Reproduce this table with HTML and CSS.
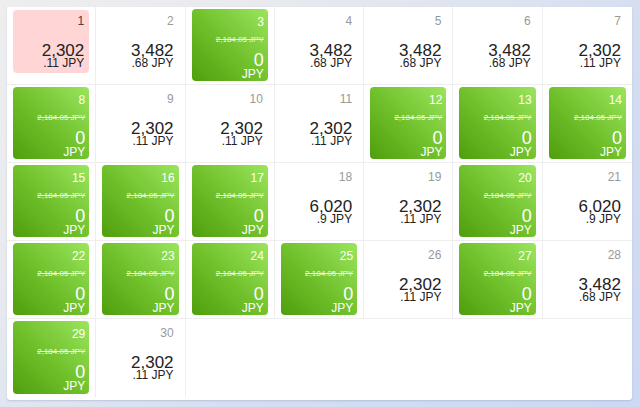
FILE: index.html
```html
<!DOCTYPE html>
<html>
<head>
<meta charset="utf-8">
<link rel="stylesheet" href="styles.css">
</head>
<body>
<div class="card">
  <div class="grid">
    <div class="cell"><div class="box today"><div class="day">1</div><div class="amt">2,302</div><div class="cents">.11 JPY</div></div></div>
    <div class="cell"><div class="box"><div class="day">2</div><div class="amt">3,482</div><div class="cents">.68 JPY</div></div></div>
    <div class="cell"><div class="box free"><div class="day">3</div><div class="was">2,184.05 JPY</div><div class="zero">0</div><div class="cur">JPY</div></div></div>
    <div class="cell"><div class="box"><div class="day">4</div><div class="amt">3,482</div><div class="cents">.68 JPY</div></div></div>
    <div class="cell"><div class="box"><div class="day">5</div><div class="amt">3,482</div><div class="cents">.68 JPY</div></div></div>
    <div class="cell"><div class="box"><div class="day">6</div><div class="amt">3,482</div><div class="cents">.68 JPY</div></div></div>
    <div class="cell"><div class="box"><div class="day">7</div><div class="amt">2,302</div><div class="cents">.11 JPY</div></div></div>

    <div class="cell"><div class="box free"><div class="day">8</div><div class="was">2,184.05 JPY</div><div class="zero">0</div><div class="cur">JPY</div></div></div>
    <div class="cell"><div class="box"><div class="day">9</div><div class="amt">2,302</div><div class="cents">.11 JPY</div></div></div>
    <div class="cell"><div class="box"><div class="day">10</div><div class="amt">2,302</div><div class="cents">.11 JPY</div></div></div>
    <div class="cell"><div class="box"><div class="day">11</div><div class="amt">2,302</div><div class="cents">.11 JPY</div></div></div>
    <div class="cell"><div class="box free"><div class="day">12</div><div class="was">2,184.05 JPY</div><div class="zero">0</div><div class="cur">JPY</div></div></div>
    <div class="cell"><div class="box free"><div class="day">13</div><div class="was">2,184.05 JPY</div><div class="zero">0</div><div class="cur">JPY</div></div></div>
    <div class="cell"><div class="box free"><div class="day">14</div><div class="was">2,184.05 JPY</div><div class="zero">0</div><div class="cur">JPY</div></div></div>

    <div class="cell"><div class="box free"><div class="day">15</div><div class="was">2,184.05 JPY</div><div class="zero">0</div><div class="cur">JPY</div></div></div>
    <div class="cell"><div class="box free"><div class="day">16</div><div class="was">2,184.05 JPY</div><div class="zero">0</div><div class="cur">JPY</div></div></div>
    <div class="cell"><div class="box free"><div class="day">17</div><div class="was">2,184.05 JPY</div><div class="zero">0</div><div class="cur">JPY</div></div></div>
    <div class="cell"><div class="box"><div class="day">18</div><div class="amt">6,020</div><div class="cents">.9 JPY</div></div></div>
    <div class="cell"><div class="box"><div class="day">19</div><div class="amt">2,302</div><div class="cents">.11 JPY</div></div></div>
    <div class="cell"><div class="box free"><div class="day">20</div><div class="was">2,184.05 JPY</div><div class="zero">0</div><div class="cur">JPY</div></div></div>
    <div class="cell"><div class="box"><div class="day">21</div><div class="amt">6,020</div><div class="cents">.9 JPY</div></div></div>

    <div class="cell"><div class="box free"><div class="day">22</div><div class="was">2,184.05 JPY</div><div class="zero">0</div><div class="cur">JPY</div></div></div>
    <div class="cell"><div class="box free"><div class="day">23</div><div class="was">2,184.05 JPY</div><div class="zero">0</div><div class="cur">JPY</div></div></div>
    <div class="cell"><div class="box free"><div class="day">24</div><div class="was">2,184.05 JPY</div><div class="zero">0</div><div class="cur">JPY</div></div></div>
    <div class="cell"><div class="box free"><div class="day">25</div><div class="was">2,184.05 JPY</div><div class="zero">0</div><div class="cur">JPY</div></div></div>
    <div class="cell"><div class="box"><div class="day">26</div><div class="amt">2,302</div><div class="cents">.11 JPY</div></div></div>
    <div class="cell"><div class="box free"><div class="day">27</div><div class="was">2,184.05 JPY</div><div class="zero">0</div><div class="cur">JPY</div></div></div>
    <div class="cell"><div class="box"><div class="day">28</div><div class="amt">3,482</div><div class="cents">.68 JPY</div></div></div>

    <div class="cell last"><div class="box free"><div class="day">29</div><div class="was">2,184.05 JPY</div><div class="zero">0</div><div class="cur">JPY</div></div></div>
    <div class="cell last"><div class="box"><div class="day">30</div><div class="amt">2,302</div><div class="cents">.11 JPY</div></div></div>
  </div>
</div>
</body>
</html>
```

FILE: styles.css
```css
html, body {
  margin: 0;
  padding: 0;
  height: 100%;
}
body {
  font-family: "Liberation Sans", Arial, sans-serif;
  background: linear-gradient(135deg, #eeeeee 0%, #e8eaee 25%, #d4def1 65%, #ccd9f2 100%);
  padding: 7px 0 0 7px;
  box-sizing: border-box;
}
.card {
  width: 625px;
  height: 393px;
  background: #ffffff;
  border-radius: 0 0 3px 3px;
  box-shadow: 0 1px 2px rgba(120, 140, 180, 0.35);
  overflow: hidden;
}
.grid {
  display: grid;
  grid-template-columns: repeat(7, 1fr);
  grid-auto-rows: 78px;
}
.cell {
  box-sizing: border-box;
  padding: 2px 6px 3px 6px;
  border-right: 1px solid #eeeeee;
  border-bottom: 1px solid #eeeeee;
  display: flex;
  flex-direction: column;
}
.cell:nth-child(7n) {
  border-right: none;
}
.cell.last {
  border-bottom: none;
}
.box {
  flex: 1;
  box-sizing: border-box;
  padding: 5px 5px 0 0;
  text-align: right;
  border-radius: 4px;
  display: flex;
  flex-direction: column;
}
.day {
  font-size: 12px;
  line-height: 14px;
  color: #999999;
}
.amt {
  margin-top: 16px;
  font-size: 17px;
  line-height: 14px;
  color: #222222;
}
.cents {
  margin-top: 1px;
  font-size: 12px;
  line-height: 9px;
  color: #222222;
}
.box.today {
  flex: none;
  height: 63px;
  margin-top: 1px;
  padding-top: 4px;
  background: #ffd5d6;
}
.box.today .day {
  color: #444444;
}
.box.free {
  padding-top: 6px;
  padding-right: 4px;
  background: linear-gradient(45deg, #4f9f0d 0%, #72c22e 50%, #9ae55e 100%);
  color: #ffffff;
}
.box.free .day {
  color: #ffffff;
}
.was {
  margin-top: 6px;
  font-size: 8px;
  line-height: 10px;
  color: #eef8e4;
  text-decoration: line-through;
}
.zero {
  margin-top: 8px;
  font-size: 18px;
  line-height: 14px;
}
.cur {
  margin-top: 1px;
  font-size: 12px;
  line-height: 12px;
}
```
